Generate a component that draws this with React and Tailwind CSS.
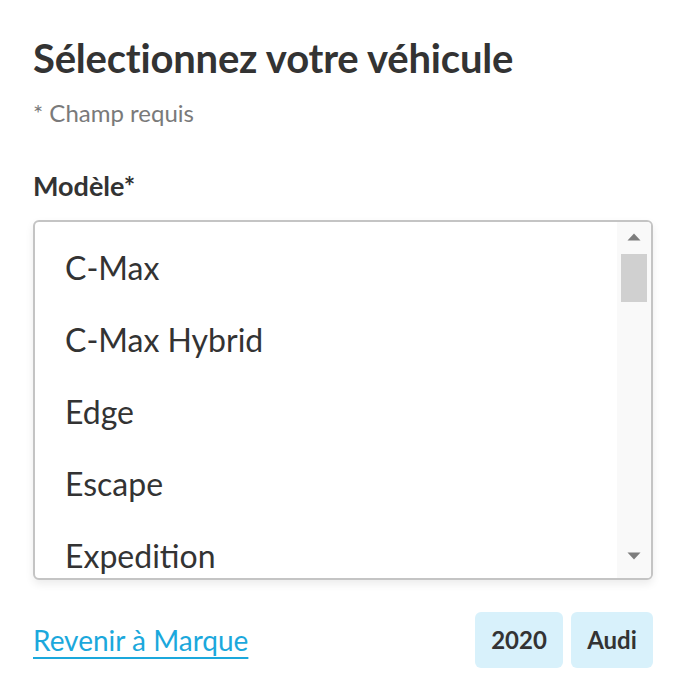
import React from "react";

const items = ["C-Max", "C-Max Hybrid", "Edge", "Escape", "Expedition"];

export default function App() {
  return (
    <div className="w-[686px] h-[700px] bg-white text-[#333333]" style={{ fontFamily: "Lato, 'Noto Sans', sans-serif" }}>
      <div className="px-[33px] pt-[34px]">
        <h1 className="text-[40px] font-bold leading-[48px] text-[#333333] tracking-[-0.2px]">Sélectionnez votre véhicule</h1>
        <p className="mt-[17px] text-[24px] leading-[28px] text-[#7a7a7a]">* Champ requis</p>
        <div className="mt-[43px] text-[27px] font-bold leading-[32px] text-[#333333]">Modèle*</div>
        <div className="mt-[18px] h-[360px] rounded-[6px] border-2 border-[#c4c4c4] bg-white shadow-[0_4px_8px_rgba(0,0,0,0.08)] flex overflow-hidden">
          <ul className="flex-1 pt-[26px] pl-[30px]">
            {items.map((it) => (
              <li key={it} className="h-[72px] text-[32px] leading-[40px] text-[#333333]">{it}</li>
            ))}
          </ul>
          <div className="w-[34px] bg-[#f9f9f9] flex flex-col items-center pt-[11px] pb-[18px]">
            <svg width="14" height="8" viewBox="0 0 14 8"><polygon points="7,0.5 13.5,7.5 0.5,7.5" fill="#7d7d7d" /></svg>
            <div className="mt-[13px] w-[26px] h-[48px] bg-[#d0d0d0]" />
            <div className="flex-1" />
            <svg width="14" height="8" viewBox="0 0 14 8"><polygon points="0.5,0.5 13.5,0.5 7,7.5" fill="#7d7d7d" /></svg>
          </div>
        </div>
        <div className="mt-[32px] flex items-center justify-between">
          <a href="#" className="text-[28px] leading-[34px] text-[#1ba8dc] underline decoration-2 underline-offset-[6px] decoration-[#1ba8dc]">Revenir à Marque</a>
          <div className="flex gap-[8px]">
            <span className="h-[56px] w-[88px] justify-center rounded-[6px] bg-[#d8f1fb] flex items-center text-[24px] font-bold text-[#333333]">2020</span>
            <span className="h-[56px] w-[82px] justify-center rounded-[6px] bg-[#d8f1fb] flex items-center text-[24px] font-bold text-[#333333]">Audi</span>
          </div>
        </div>
      </div>
    </div>
  );
}
